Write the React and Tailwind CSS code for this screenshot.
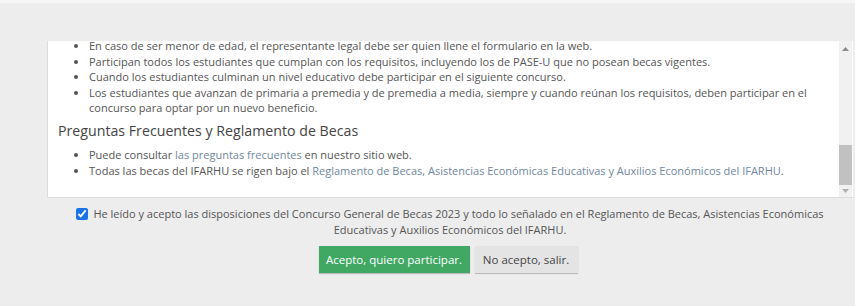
import React from 'react';

const link = 'text-[#6f87a0]';

export default function App() {
    return (
        <div className="w-[855px] h-[306px] bg-[#ededed] font-['Open_Sans',sans-serif] text-[11px] text-[#555] overflow-hidden">
            <div className="h-[3px] bg-[#f6f6f6]"></div>

            <div className="pt-[38px] pl-[47px] pr-[2px]">
                <div className="flex h-[157px] bg-white border-l border-b border-[#dcdcdc] overflow-hidden">
                    <div className="flex-1 overflow-hidden px-[10px]">
                        <ul className="list-disc pl-[31px] leading-[15.6px] -mt-[3px]">
                            <li>En caso de ser menor de edad, el representante legal debe ser quien llene el formulario en la web.</li>
                            <li>Participan todos los estudiantes que cumplan con los requisitos, incluyendo los de PASE-U que no posean becas vigentes.</li>
                            <li>Cuando los estudiantes culminan un nivel educativo debe participar en el siguiente concurso.</li>
                            <li>Los estudiantes que avanzan de primaria a premedia y de premedia a media, siempre y cuando reúnan los requisitos, deben participar en el concurso para optar por un nuevo beneficio.</li>
                        </ul>
                        <h3 className="text-[14.2px] leading-[20px] mt-[5px] mb-[6px] text-[#444]">Preguntas Frecuentes y Reglamento de Becas</h3>
                        <ul className="list-disc pl-[31px] leading-[15.6px]">
                            <li>Puede consultar <a className={link}>las preguntas frecuentes</a> en nuestro sitio web.</li>
                            <li>Todas las becas del IFARHU se rigen bajo el <a className={link}>Reglamento de Becas, Asistencias Económicas Educativas y Auxilios Económicos del IFARHU</a>.</li>
                        </ul>
                    </div>

                    {/* scrollbar */}
                    <div className="w-[13px] mr-[1px] bg-[#f1f1f1] flex flex-col items-center">
                        <div className="h-[16px] flex items-center justify-center">
                            <svg width="7" height="4" viewBox="0 0 7 4"><path d="M0 4 L3.5 0 L7 4 Z" fill="#8a8a8a" /></svg>
                        </div>
                        <div className="flex-1 w-full flex flex-col justify-end">
                            <div className="h-[40px] w-full bg-[#c1c1c1]"></div>
                        </div>
                        <div className="h-[12px] flex items-center justify-center">
                            <svg width="7" height="4" viewBox="0 0 7 4"><path d="M0 0 L3.5 4 L7 0 Z" fill="#b0b0b0" /></svg>
                        </div>
                    </div>
                </div>
            </div>

            <div className="ml-[47px] w-[806px] px-[15px] pt-[8px] text-center leading-[16px] text-[#555]">
                <label>
                    <input type="checkbox" defaultChecked className="w-[12px] h-[12px] align-[-2px] mr-[5px] accent-[#1a73e8]" />
                    He leído y acepto las disposiciones del Concurso General de Becas 2023 y todo lo señalado en el Reglamento de Becas, Asistencias Económicas Educativas y Auxilios Económicos del IFARHU.
                </label>
            </div>

            <div className="flex justify-center gap-[5px] pl-[47px] pr-[6px] mt-[8px]">
                <button className="h-[27px] w-[151px] bg-[#41a864] text-white text-[11.5px] shadow-[0_1px_1px_rgba(0,0,0,0.2)]">
                    Acepto, quiero participar.
                </button>
                <button className="h-[27px] w-[103px] bg-[#e4e4e4] text-[#444] text-[11.5px] shadow-[0_1px_1px_rgba(0,0,0,0.2)]">
                    No acepto, salir.
                </button>
            </div>
        </div>
    );
}
